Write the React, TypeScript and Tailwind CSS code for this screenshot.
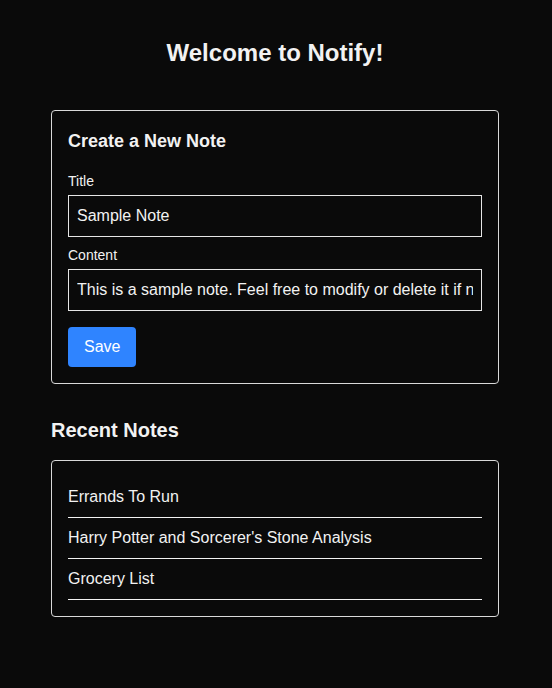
const notes = ['Errands To Run', "Harry Potter and Sorcerer's Stone Analysis", 'Grocery List'];

export default function App() {
  return (
    <div className="min-h-[688px] bg-[#0a0a0a] text-[#f2f2f2] font-['Liberation_Sans',Arial,sans-serif] pt-[37px] pb-10">
      <div className="w-[448px] ml-[51px]">
        <h1 className="text-center text-2xl leading-8 font-bold mb-[41px]">Welcome to Notify!</h1>

        <div className="border border-[#d9d9d9] rounded p-4">
          <h2 className="text-lg leading-7 font-bold mb-4">Create a New Note</h2>
          <label className="block text-sm leading-5 mb-1">Title</label>
          <input
            className="block w-full border border-[#e6e6e6] bg-transparent px-2 py-2 text-base leading-6 outline-none mb-2"
            defaultValue="Sample Note"
          />
          <label className="block text-sm leading-5 mb-1">Content</label>
          <input
            className="block w-full border border-[#e6e6e6] bg-transparent px-2 py-2 text-base leading-6 outline-none mb-4"
            defaultValue="This is a sample note. Feel free to modify or delete it if needed."
          />
          <button className="bg-[#2f84ff] text-white rounded px-4 py-2 text-base leading-6">Save</button>
        </div>

        <h2 className="text-xl leading-7 font-bold mt-8 mb-[16px]">Recent Notes</h2>

        <div className="border border-[#d9d9d9] rounded p-4">
          <ul>
            {notes.map((n) => (
              <li key={n} className="py-2 text-base leading-6 border-b border-[#f2f2f2]">
                {n}
              </li>
            ))}
          </ul>
        </div>
      </div>
    </div>
  );
}
